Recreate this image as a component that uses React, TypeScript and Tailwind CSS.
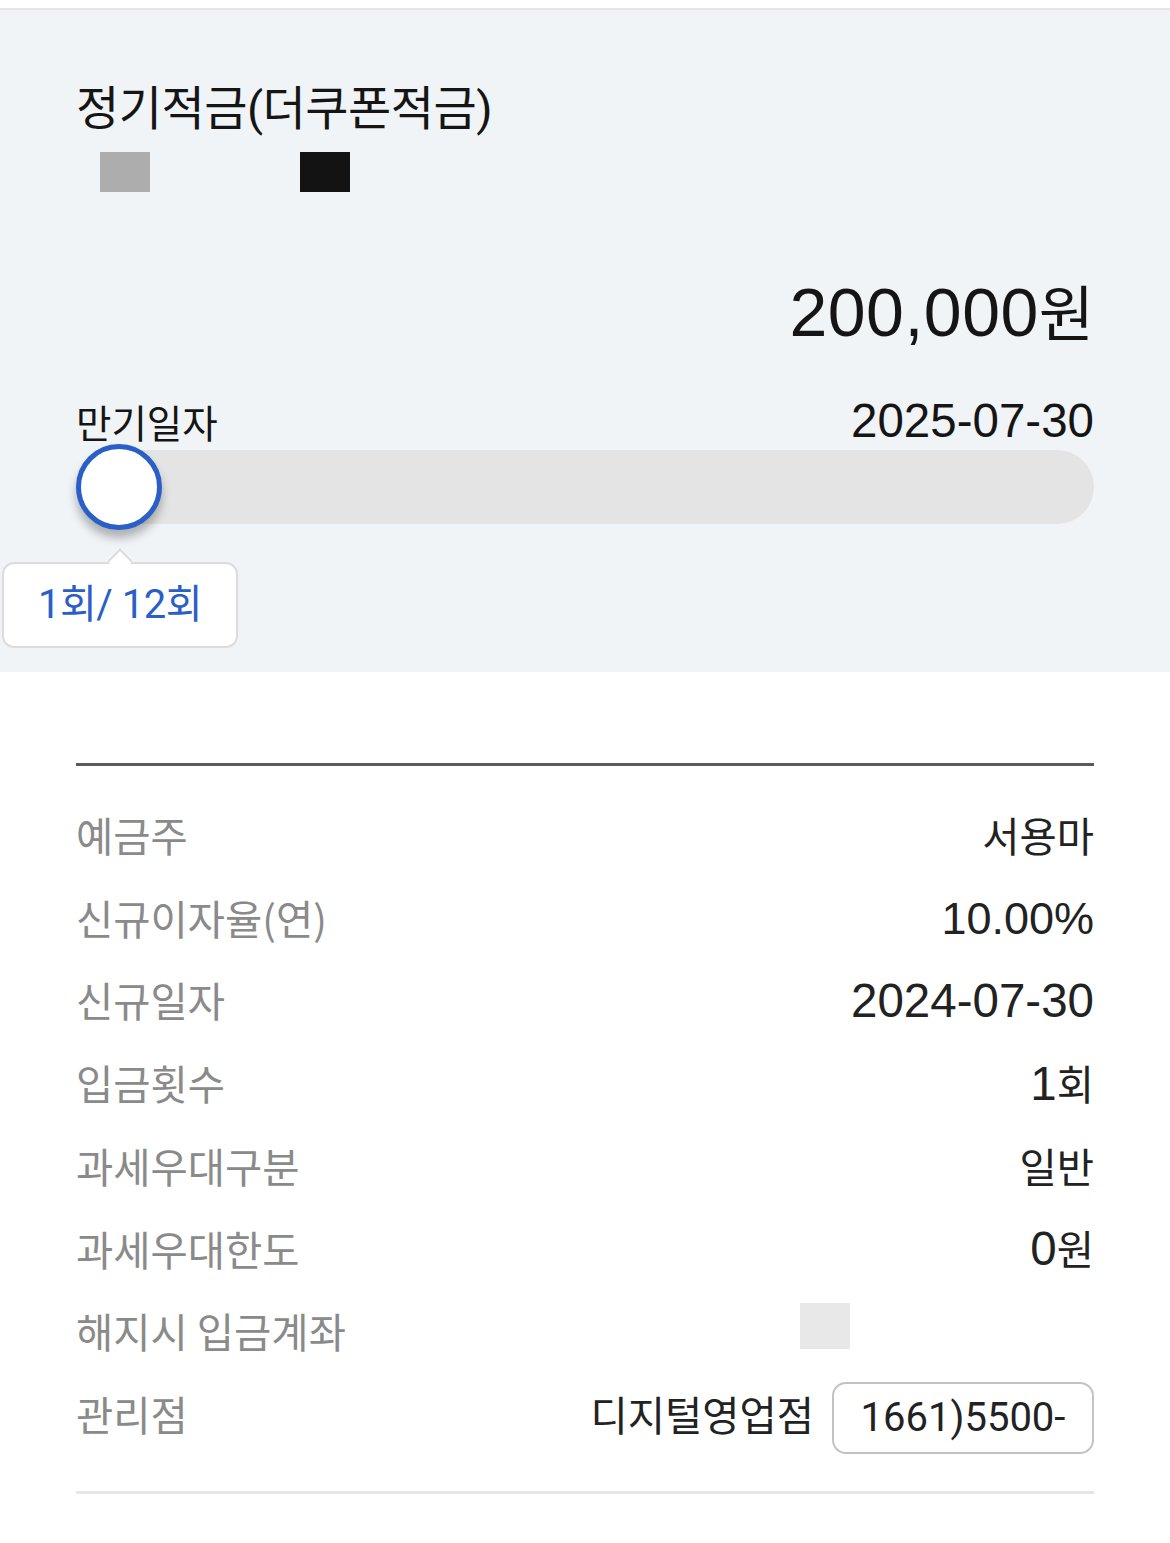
import React from "react";

const KR = { fontFamily: "'Noto Sans CJK KR', sans-serif" };
const NUM = { fontFamily: "'Liberation Sans', 'Noto Sans CJK KR', sans-serif" };
const ROBO = { fontFamily: "Roboto, 'Noto Sans CJK KR', sans-serif" };

function Num({ children, size = "text-[47.5px]" }: { children: React.ReactNode; size?: string }) {
  return (
    <span className={`${size} leading-none`} style={NUM}>
      {children}
    </span>
  );
}

function Kr({ children }: { children: React.ReactNode }) {
  return (
    <span className="text-[40.5px] leading-none" style={KR}>
      {children}
    </span>
  );
}

const rows: { label: string; value: React.ReactNode }[] = [
  { label: "예금주", value: <Kr>서용마</Kr> },
  { label: "신규이자율(연)", value: <Num size="text-[45px]">10.00%</Num> },
  { label: "신규일자", value: <Num>2024-07-30</Num> },
  {
    label: "입금횟수",
    value: (
      <span className="flex items-baseline">
        <Num>1</Num>
        <Kr>회</Kr>
      </span>
    ),
  },
  { label: "과세우대구분", value: <Kr>일반</Kr> },
  {
    label: "과세우대한도",
    value: (
      <span className="flex items-baseline">
        <Num>0</Num>
        <Kr>원</Kr>
      </span>
    ),
  },
  {
    label: "해지시 입금계좌",
    value: <div className="w-[50px] h-[46px] bg-[#e8e8e8] mr-[244px] -mt-[10px]" />,
  },
  {
    label: "관리점",
    value: (
      <div className="flex items-center">
        <Kr>디지털영업점</Kr>
        <span
          className="ml-[18px] mt-[8px] flex items-center justify-center w-[262px] h-[72px] border-2 border-[#c3c3c7] rounded-[14px] bg-white text-[40px] leading-none text-[#222]"
          style={ROBO}
        >
          1661)5500-
        </span>
      </div>
    ),
  },
];

export default function App() {
  return (
    <div className="w-[1170px] h-[1543px] bg-white overflow-hidden" style={KR}>
      <div className="h-[8px] bg-white" />
      <div className="h-[2px] bg-[#e3e5e8]" />
      <div className="h-[662px] bg-[#f0f4f7] px-[76px] flex flex-col">
        <div className="pt-[74px] h-[124px] text-[47px] leading-[50px] text-[#151515] tracking-[-0.5px]" style={ROBO}>
          정기적금(더쿠폰적금)
        </div>
        <div className="flex h-[40px] mt-[18px]">
          <div className="ml-[24px] w-[50px] h-[40px] bg-[#adadae]" />
          <div className="ml-[150px] w-[50px] h-[40px] bg-[#131313]" />
        </div>
        <div className="mt-[90px] h-[60px] flex items-center justify-end text-[#151515]">
          <span className="flex items-baseline">
            <span className="text-[68px] leading-none tracking-[0.5px]" style={NUM}>
              200,000
            </span>
            <span className="text-[60px] leading-none" style={KR}>
              원
            </span>
          </span>
        </div>
        <div className="mt-[54px] h-[50px] flex items-center justify-between text-[#151515]">
          <span className="text-[38.5px] leading-none" style={KR}>
            만기일자
          </span>
          <Num>2025-07-30</Num>
        </div>
        <div className="relative mt-[-2px] h-[86px] flex items-center">
          <div className="w-full h-[74px] rounded-full bg-[#e4e4e4]" />
          <div className="absolute left-0 top-[0px] w-[86px] h-[86px] rounded-full bg-white border-[5px] border-[#2a5fc7] shadow-[0_8px_10px_rgba(0,0,0,0.28)]" />
        </div>
        <div className="relative -ml-[74px] mt-[32px] w-[236px] h-[86px] rounded-[12px] bg-white border-2 border-[#dcdcdc] flex items-center justify-center">
          <div className="absolute left-[107px] top-[-12px] w-[18px] h-[18px] bg-white border-l-2 border-t-2 border-[#dcdcdc] rotate-45" />
          <span className="relative text-[40px] leading-none text-[#2a5fc7] tracking-[-0.5px]" style={ROBO}>
            1회/ 12회
          </span>
        </div>
      </div>
      <div className="px-[76px]">
        <div className="mt-[91px] h-[3px] bg-[#5a5a5a]" />
        <div className="mt-[28px]">
          {rows.map((r) => (
            <div key={r.label} className="h-[82.7px] flex items-center justify-between">
              <span className="text-[40.5px] leading-none text-[#8a8a8a]" style={KR}>
                {r.label}
              </span>
              <span className="text-[#222] flex items-center">{r.value}</span>
            </div>
          ))}
        </div>
        <div className="mt-[35px] h-[3px] bg-[#e6e6e6]" />
      </div>
    </div>
  );
}
